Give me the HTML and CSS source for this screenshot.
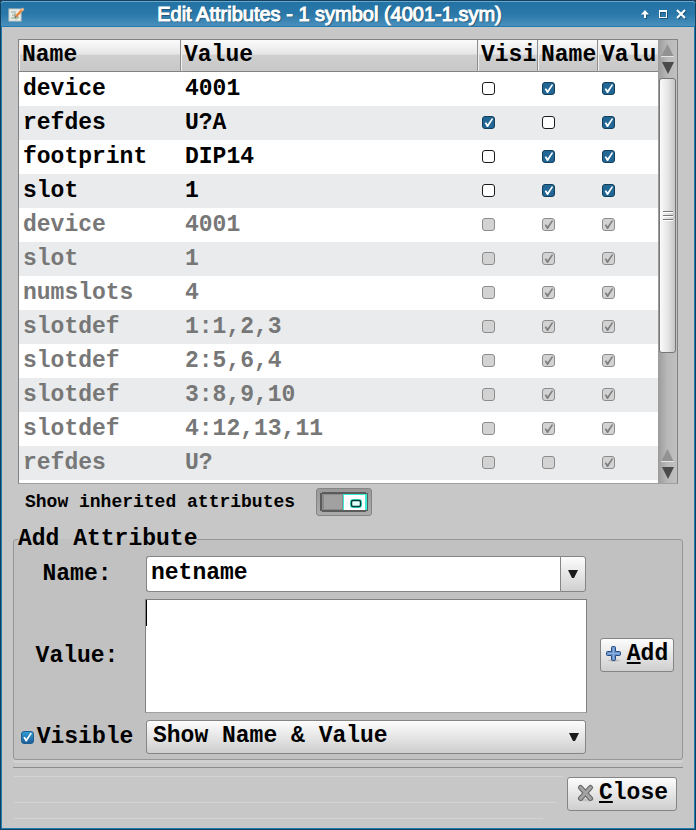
FILE: index.html
```html
<!DOCTYPE html>
<html lang="en">
<head>
<meta charset="utf-8">
<title>Edit Attributes - 1 symbol (4001-1.sym)</title>
<link rel="stylesheet" href="styles.css">
</head>
<body>
<div class="window">
  <header class="titlebar">
    <svg class="app-icon" width="17" height="15" viewBox="0 0 17 15" aria-hidden="true">
      <rect x="1" y="2" width="12" height="12" fill="#e9ebe6" stroke="#c9cdc8"/>
      <path d="M3 5h3M3 11h3M7 4v8M6 8l5 3M4 8h3" stroke="#8fa79a" fill="none"/>
      <circle cx="8" cy="10" r="2" fill="none" stroke="#a5b58f"/>
      <path d="M8 9.500L14.500 2.500" stroke="#e8873a" stroke-width="2.500"/>
      <path d="M13.500 3.500L15.500 1.500" stroke="#f3b98a" stroke-width="2.500"/>
      <path d="M7 11l.5-2 1.500 1.300z" fill="#555"/>
    </svg>
    <h1 class="title">Edit Attributes - 1 symbol (4001-1.sym)</h1>
    <div class="window-buttons">
      <button type="button" aria-label="Shade"><svg width="10" height="10" viewBox="0 0 10 10"><path d="M5 1L9 5.500H6V9H4V5.500H1z" fill="#fff"/></svg></button>
      <button type="button" aria-label="Maximize"><svg width="10" height="10" viewBox="0 0 10 10"><path d="M1 1h8v8H1zM2 3v5h6V3z" fill="#fff" fill-rule="evenodd"/></svg></button>
      <button type="button" aria-label="Close window"><svg width="10" height="10" viewBox="0 0 10 10"><path d="M1 1l8 8M9 1L1 9" stroke="#fff" stroke-width="2"/></svg></button>
    </div>
  </header>

  <main class="content">
    <section class="tree">
      <div class="tree-view">
        <table>
          <colgroup><col class="col-name"><col><col class="col-flag"><col class="col-flag"><col class="col-flag"></colgroup>
          <thead>
            <tr><th>Name</th><th>Value</th><th>Visi</th><th>Name</th><th>Valu</th></tr>
          </thead>
          <tbody>
            <tr><td>device</td><td>4001</td><td><input type="checkbox" aria-label="Visible"></td><td><input type="checkbox" aria-label="Name" checked></td><td><input type="checkbox" aria-label="Value" checked></td></tr>
            <tr><td>refdes</td><td>U?A</td><td><input type="checkbox" aria-label="Visible" checked></td><td><input type="checkbox" aria-label="Name"></td><td><input type="checkbox" aria-label="Value" checked></td></tr>
            <tr><td>footprint</td><td>DIP14</td><td><input type="checkbox" aria-label="Visible"></td><td><input type="checkbox" aria-label="Name" checked></td><td><input type="checkbox" aria-label="Value" checked></td></tr>
            <tr><td>slot</td><td>1</td><td><input type="checkbox" aria-label="Visible"></td><td><input type="checkbox" aria-label="Name" checked></td><td><input type="checkbox" aria-label="Value" checked></td></tr>
            <tr class="inherited"><td>device</td><td>4001</td><td><input type="checkbox" aria-label="Visible" disabled></td><td><input type="checkbox" aria-label="Name" checked disabled></td><td><input type="checkbox" aria-label="Value" checked disabled></td></tr>
            <tr class="inherited"><td>slot</td><td>1</td><td><input type="checkbox" aria-label="Visible" disabled></td><td><input type="checkbox" aria-label="Name" checked disabled></td><td><input type="checkbox" aria-label="Value" checked disabled></td></tr>
            <tr class="inherited"><td>numslots</td><td>4</td><td><input type="checkbox" aria-label="Visible" disabled></td><td><input type="checkbox" aria-label="Name" checked disabled></td><td><input type="checkbox" aria-label="Value" checked disabled></td></tr>
            <tr class="inherited"><td>slotdef</td><td>1:1,2,3</td><td><input type="checkbox" aria-label="Visible" disabled></td><td><input type="checkbox" aria-label="Name" checked disabled></td><td><input type="checkbox" aria-label="Value" checked disabled></td></tr>
            <tr class="inherited"><td>slotdef</td><td>2:5,6,4</td><td><input type="checkbox" aria-label="Visible" disabled></td><td><input type="checkbox" aria-label="Name" checked disabled></td><td><input type="checkbox" aria-label="Value" checked disabled></td></tr>
            <tr class="inherited"><td>slotdef</td><td>3:8,9,10</td><td><input type="checkbox" aria-label="Visible" disabled></td><td><input type="checkbox" aria-label="Name" checked disabled></td><td><input type="checkbox" aria-label="Value" checked disabled></td></tr>
            <tr class="inherited"><td>slotdef</td><td>4:12,13,11</td><td><input type="checkbox" aria-label="Visible" disabled></td><td><input type="checkbox" aria-label="Name" checked disabled></td><td><input type="checkbox" aria-label="Value" checked disabled></td></tr>
            <tr class="inherited"><td>refdes</td><td>U?</td><td><input type="checkbox" aria-label="Visible" disabled></td><td><input type="checkbox" aria-label="Name" disabled></td><td><input type="checkbox" aria-label="Value" checked disabled></td></tr>
          </tbody>
        </table>
      </div>
      <div class="scrollbar" aria-hidden="true">
        <svg class="steppers" width="19" height="38" viewBox="0 0 19 38"><path d="M9.500 4L15.500 16h-12z" fill="#929292"/><path d="M3 16h13v1H3z" fill="#e4e4e4"/><path d="M4 22h12L10 34z" fill="#4a4a4a"/></svg>
        <div class="track">
          <div class="thumb"><svg width="10" height="10" viewBox="0 0 10 10"><path d="M0 0h10v1H0zM0 4h10v1H0zM0 8h10v1H0z" fill="#777"/><path d="M0 1h10v1H0zM0 5h10v1H0zM0 9h10v1H0z" fill="#fff"/></svg></div>
        </div>
        <svg class="steppers" width="19" height="38" viewBox="0 0 19 38"><path d="M9.500 4L15.500 16h-12z" fill="#929292"/><path d="M3 16h13v1H3z" fill="#e4e4e4"/><path d="M4 22h12L10 34z" fill="#4a4a4a"/></svg>
      </div>
    </section>

    <div class="inherit-row">
      <span id="inherit-label">Show inherited attributes</span>
      <button type="button" class="toggle" role="switch" aria-checked="true" aria-labelledby="inherit-label">
        <svg width="48" height="20" viewBox="0 0 48 20">
          <path d="M2 0h44v1h2v18h-2v1H2v-1H0V1h2z" fill="#5b5b5b"/>
          <rect x="2" y="2" width="22" height="16" fill="#8a8a8a"/>
          <rect x="4" y="3" width="18" height="14" fill="#a1a1a1"/>
          <path d="M23 2h24v16H23z" fill="#3dedd3"/>
          <path d="M24 3h21v15H24z" fill="#fff"/>
          <rect x="31.500" y="8.500" width="9" height="6" rx="1.500" fill="#fff" stroke="#3dedd3" stroke-width="3"/>
          <rect x="31.500" y="8.500" width="9" height="6" rx="1.500" fill="#e0fff9" stroke="#003b34" stroke-width="1.500"/>
        </svg>
      </button>
    </div>

    <fieldset class="add-panel">
      <legend>Add Attribute</legend>
      <div class="form">
        <label class="caption" for="attr-name">Name:</label>
        <div class="combo">
          <input id="attr-name" type="text" value="netname">
          <button type="button" aria-label="Show names"><svg width="10" height="9" viewBox="0 0 10 9"><path d="M0 0h10L6 8H4z" fill="#1a1a1a"/></svg></button>
        </div>
        <label class="caption" for="attr-value">Value:</label>
        <div class="value-box">
          <textarea id="attr-value"></textarea>
          <span class="caret"></span>
        </div>
        <label class="caption visible"><input type="checkbox" checked>Visible</label>
        <div class="select">
          <select aria-label="Show"><option>Show Name &amp; Value</option></select>
          <svg width="10" height="9" viewBox="0 0 10 9"><path d="M0 0h10L6 8H4z" fill="#1a1a1a"/></svg>
        </div>
        <button type="button" class="button add">
          <svg width="16" height="16" viewBox="0 0 16 16"><ellipse cx="8" cy="14.500" rx="6" ry="1.500" fill="#000" opacity=".12"/><path d="M5.500 1.500q0-1 1-1h2q1 0 1 1v4h4q1 0 1 1v2q0 1-1 1h-4v4q0 1-1 1h-2q-1 0-1-1v-4h-4q-1 0-1-1v-2q0-1 1-1h4z" fill="#6a95cc" stroke="#274c85"/><path d="M7.500 2v11M2 7.500h11" stroke="#8bb0dd"/></svg>
          <span><u>A</u>dd</span>
        </button>
      </div>
    </fieldset>

    <footer class="actions">
      <button type="button" class="button close">
        <svg width="18" height="18" viewBox="0 0 18 18"><ellipse cx="10" cy="16" rx="7" ry="1.500" fill="#000" opacity=".12"/><path d="M3.500 3.500l10 11M13.500 3.500L3.500 14.500" stroke="#666" stroke-width="5" stroke-linecap="round"/><path d="M3.500 3.500l10 11M13.500 3.500L3.500 14.500" stroke="#a3a3a3" stroke-width="3" stroke-linecap="round"/></svg>
        <span><u>C</u>lose</span>
      </button>
    </footer>
  </main>
</div>
</body>
</html>
```
FILE: styles.css
```css
* {
  box-sizing: border-box;
}

body {
  margin: 0;
  background: #16405e;
  color: #000;
  font: bold 23px/26px "Liberation Mono", monospace;
}

button,
input,
select,
textarea {
  margin: 0;
  font: inherit;
  color: inherit;
}

svg {
  display: block;
  flex: none;
}

.window {
  display: flex;
  flex-direction: column;
  height: 100vh;
  border: 1px solid #12405f;
  border-radius: 4px 4px 0 0;
  background: #c7c7c7;
}

.titlebar {
  display: flex;
  align-items: center;
  height: 26px;
  padding: 0 9px 0 7px;
  border-top: 1px solid #6aa5cc;
  border-bottom: 1px solid #1f7ab0;
  border-radius: 3px 3px 0 0;
  background: linear-gradient(#2272a4, #2a78a9 50%, #4a90bd);
}

.title {
  flex: 1;
  margin: 0;
  padding-right: 6px;
  color: #fff;
  font: 20px/24px "Liberation Sans", sans-serif;
  text-align: center;
  text-shadow: 1px 1px 1px #16405e;
  white-space: nowrap;
  -webkit-text-stroke: 1px #fff;
}

.window-buttons {
  display: flex;
  gap: 8px;
}

.window-buttons button {
  padding: 0;
  border: 0;
  background: none;
  filter: drop-shadow(1px 1px 0 #1b567c);
}

.content {
  display: flex;
  flex: 1;
  flex-direction: column;
  min-height: 0;
  padding: 12px 11px 0;
  border: solid #1f7ab0;
  border-width: 0 1px 1px;
}

/* Attribute list */

.tree {
  display: flex;
  flex: 1;
  min-height: 0;
  margin: 0 5px;
  border: 1px solid #828282;
  border-bottom-color: #a0a0a0;
  background: #fff;
}

.tree-view {
  flex: 1;
  overflow: hidden;
}

table {
  width: 100%;
  border-collapse: separate;
  border-spacing: 0;
  table-layout: fixed;
}

.col-name {
  width: 162px;
}

.col-flag {
  width: 60px;
}

th {
  height: 32px;
  padding: 0 0 2px 3px;
  border-right: 1px solid #8e8e8e;
  border-bottom: 1px solid #838383;
  background: linear-gradient(#fbfbfb, #e6e6e6 45%, #cfcfcf 50%, #c8c8c8);
  box-shadow: inset 1px 0 #f0f0f0;
  font-weight: bold;
  text-align: left;
  white-space: nowrap;
  overflow: hidden;
}

th:last-child {
  border-right: 0;
}

td {
  height: 34px;
  padding: 0 4px;
  white-space: nowrap;
}

tbody tr:nth-child(even) {
  background: #e9ebec;
}

.inherited {
  color: #777;
}

input[type="checkbox"] {
  display: block;
  flex: none;
  width: 13px;
  height: 13px;
  border: 1px solid #1a1a1a;
  border-radius: 3px;
  background: #fff;
  appearance: none;
}

td input[type="checkbox"] {
  margin-bottom: 1px;
}

input[type="checkbox"]:checked {
  border-color: #123f5c;
  background: #216694;
}

input[type="checkbox"]:checked::before {
  display: block;
  width: 11px;
  height: 11px;
  background: #fff;
  clip-path: polygon(15% 55%, 28% 48%, 42% 66%, 80% 12%, 93% 16%, 46% 92%, 36% 92%);
  content: "";
}

input[type="checkbox"]:disabled {
  border-color: #8c8c8c;
  background: #d3d3d3;
}

input[type="checkbox"]:disabled::before {
  background: #808080;
}

.scrollbar {
  display: flex;
  flex-direction: column;
  width: 19px;
  background: linear-gradient(90deg, #9b9b9b, #b9b9b9 50%, #c0c0c0);
}

.track {
  flex: 1;
  padding: 0 1px;
}

.thumb {
  display: flex;
  align-items: center;
  justify-content: center;
  height: 75%;
  border: 1px solid #777;
  border-radius: 3px;
  background: linear-gradient(90deg, #fafafa, #e6e6e6 50%, #c6c6c6);
}

/* Inherited attributes switch */

.inherit-row {
  display: flex;
  align-items: center;
  gap: 21px;
  margin: 4px 12px 0;
  font-size: 18px;
  line-height: 26px;
}

.toggle {
  padding: 3px;
  border: 1px solid #858585;
  border-radius: 3px;
  background: linear-gradient(#999, #ababab);
}

/* Add attribute form */

.add-panel {
  min-width: 0;
  margin: 10px 0 0;
  padding: 4px 8px 5px 6px;
  border: 1px solid #969696;
  border-radius: 3px;
  background: #c1c1c1;
  box-shadow: 0 3px #d0d0d0;
}

.add-panel legend {
  margin-left: -2px;
  padding: 0;
}

.form {
  display: grid;
  grid-template-columns: 114px 1fr 74px;
  row-gap: 7px;
  align-items: center;
}

.caption {
  text-align: center;
}

.visible {
  display: flex;
  gap: 3px;
  align-items: center;
  justify-content: center;
}

.visible input[type="checkbox"]:checked {
  border-color: #1b5f95;
  background: linear-gradient(#2f9bd3, #1f5e9a);
}

.combo,
.value-box,
.select {
  position: relative;
  margin: 0 13px 0 11px;
}

.combo {
  display: flex;
  height: 36px;
  padding: 0 1px;
}

.combo input {
  flex: 1;
  min-width: 0;
  padding: 0 4px 2px;
  border: 1px solid #858585;
  border-right: 0;
  border-radius: 3px 0 0 3px;
  background: #fff;
}

.combo button {
  display: flex;
  align-items: center;
  justify-content: center;
  width: 26px;
  padding: 0;
  border: 1px solid #858585;
  border-radius: 0 3px 3px 0;
  background: linear-gradient(#fcfcfc, #d0d0d0);
}

.value-box textarea {
  display: block;
  width: 100%;
  height: 114px;
  padding: 1px 2px;
  border: 1px solid #808080;
  border-bottom-color: #a0a0a0;
  background: #fff;
  resize: none;
}

.caret {
  position: absolute;
  top: 1px;
  left: 1px;
  width: 1px;
  height: 26px;
  background: #000;
}

.select {
  padding: 0 1px;
}

.select select {
  display: block;
  width: 100%;
  height: 34px;
  padding: 0 6px 2px;
  border: 1px solid #858585;
  border-radius: 3px;
  background: linear-gradient(#fdfdfd, #cecece);
  appearance: none;
}

.select svg {
  position: absolute;
  top: 13px;
  right: 8px;
  pointer-events: none;
}

.button {
  display: flex;
  align-items: center;
  justify-content: center;
  height: 34px;
  padding: 0 3px 2px;
  border: 1px solid #858585;
  border-radius: 3px;
  background: linear-gradient(#fdfdfd, #cecece);
  white-space: nowrap;
}

.button u {
  text-decoration-thickness: 2px;
  text-underline-offset: 2px;
}

.add {
  grid-row: 1 / 4;
  grid-column: 3;
  gap: 5px;
}

.close {
  gap: 4px;
  padding: 0 8px 2px 9px;
}

/* Footer */

.actions {
  display: flex;
  justify-content: flex-end;
  margin-top: 7px;
  padding: 9px 6px 17px;
  border-top: 1px solid #8c8c8c;
  background:
    linear-gradient(#d3d3d3, #d3d3d3) 1px 8px / 82% 1px no-repeat,
    linear-gradient(#d3d3d3, #d3d3d3) 1px 34px / 81% 1px no-repeat,
    linear-gradient(#d3d3d3, #d3d3d3) 1px 50px / 79% 1px no-repeat;
}
```
